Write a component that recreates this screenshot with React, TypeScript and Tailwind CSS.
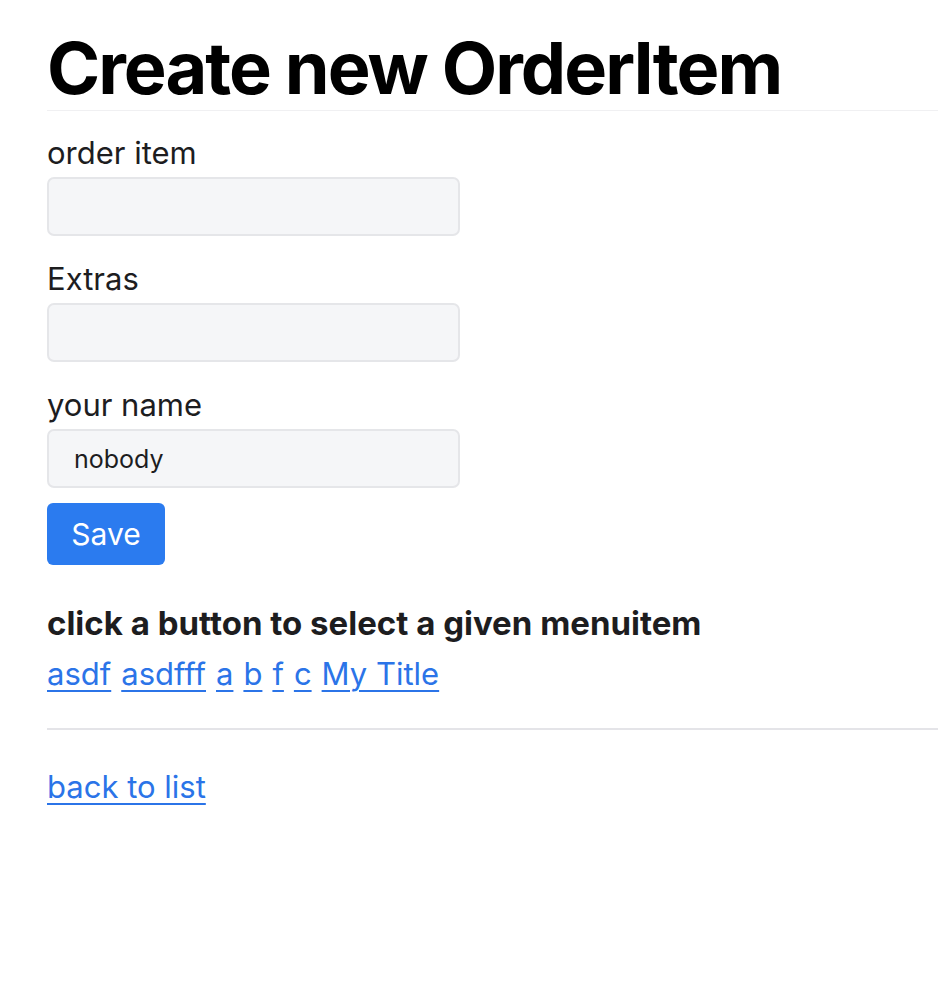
import React from "react";

function Field({ label, value }: { label: string; value?: string }) {
   return (
      <div className="flex flex-col">
         <label className="text-[31px] leading-[36px] text-[#1d1d1f]">{label}</label>
         <input
            className="mt-[6px] w-[413px] h-[59px] rounded-[7px] border-2 border-[#e5e6e9] bg-[#f5f6f8] px-[25px] text-[25px] text-[#1d1d1f] outline-none"
            defaultValue={value}
         />
      </div>
   );
}

export default function App() {
   const items = ["asdf", "asdfff", "a", "b", "f", "c", "My Title"];
   return (
      <div className="w-full min-h-screen bg-white pl-[47px] font-['Inter',sans-serif] text-[#1d1d1f]">
         <h1 className="pt-[32px] pb-[6px] text-[72px] leading-[72px] font-bold tracking-[-2px] text-black border-b border-[#f0f0f2]">
            Create new OrderItem
         </h1>
         <form className="flex flex-col gap-[25px] mt-[24px]">
            <Field label="order item" />
            <Field label="Extras" />
            <Field label="your name" value="nobody" />
         </form>
         <button className="mt-[15px] w-[118px] h-[62px] rounded-[6px] bg-[#2b7bef] text-white text-[30px]">
            Save
         </button>
         <h3 className="mt-[38px] text-[33px] leading-[40px] font-bold text-[#1d1d1f]">
            click a button to select a given menuitem
         </h3>
         <div className="flex gap-[10px] mt-[12px] text-[31px] leading-[38px]">
            {items.map((i) => (
               <a key={i} href="#" className="text-[#2b74e8] underline underline-offset-[5px] decoration-2">
                  {i}
               </a>
            ))}
         </div>
         <hr className="mt-[35px] border-0 border-t-2 border-[#e4e4e8]" />
         <a href="#" className="inline-block mt-[38px] text-[31px] leading-[38px] text-[#2b74e8] underline underline-offset-[5px] decoration-2">
            back to list
         </a>
      </div>
   );
}
